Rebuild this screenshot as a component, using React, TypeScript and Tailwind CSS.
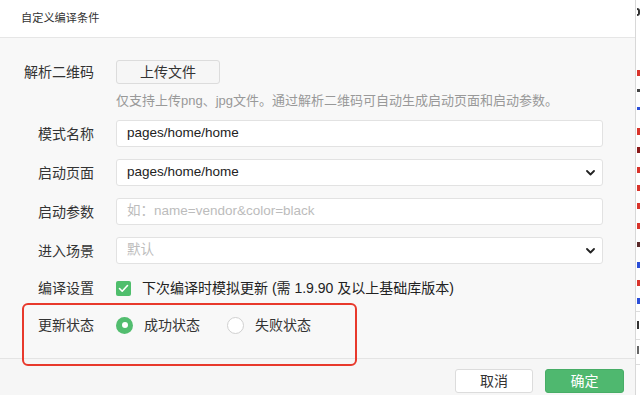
import React from "react";

const FONT = { fontFamily: '"Liberation Sans", "Noto Sans CJK SC", sans-serif' };

function Chevron() {
  return (
    <svg width="9" height="6" viewBox="0 0 9 6" className="absolute right-[7px] top-1/2 -translate-y-1/2">
      <path d="M1 1 L4.5 4.5 L8 1" fill="none" stroke="#222" strokeWidth="1.8" strokeLinecap="round" strokeLinejoin="round" />
    </svg>
  );
}

function Row({ label, children, className = "" }: { label: string; children: React.ReactNode; className?: string }) {
  return (
    <div className={`flex items-center ${className}`}>
      <div className="w-[94px] text-right text-[14px] text-[#333] leading-[20px]">{label}</div>
      <div className="ml-[22px] w-[487px]">{children}</div>
    </div>
  );
}

function Field({ text, placeholder, select }: { text?: string; placeholder?: string; select?: boolean }) {
  return (
    <div className="relative h-[27px] w-full bg-white border border-[#e2e2e2] rounded-[3px] flex items-center pl-[10px]">
      {text ? (
        <span className="text-[13.5px] text-[#222]">{text}</span>
      ) : (
        <span className="text-[13.5px] text-[#bcbcbc]">{placeholder}</span>
      )}
      {select && <Chevron />}
    </div>
  );
}

const stripMarks: [number, string, number][] = [
  [70, "#d9342b", 6],
  [89, "#444", 3],
  [107, "#2b4fd9", 3],
  [128, "#d9342b", 7],
  [147, "#8b1a1a", 6],
  [167, "#d9342b", 6],
  [185, "#d9342b", 6],
  [203, "#d9342b", 6],
  [223, "#d9342b", 6],
  [242, "#5a2a2a", 5],
  [262, "#2b4fd9", 6],
  [280, "#d9342b", 6],
  [298, "#2b4fd9", 6],
];

export default function App() {
  return (
    <div className="flex w-[640px] h-[395px] overflow-hidden bg-white" style={FONT}>
      <div className="relative flex flex-col w-[635px] h-full bg-[#f8f8f8] shrink-0">
        <div className="h-[38px] bg-white border-b border-[#e6e6e6] flex items-center pl-[21px] shrink-0">
          <span className="text-[11.2px] text-[#333]">自定义编译条件</span>
        </div>

        <div className="h-[320px] pt-[22px] shrink-0">
          <Row label="解析二维码">
            <div className="h-[24px] w-[104px] bg-[#f6f6f6] border border-[#dcdcdc] rounded-[3px] flex items-center justify-center text-[14px] text-[#333]">
              上传文件
            </div>
          </Row>
          <div className="ml-[116px] mt-[8px] text-[13px] leading-[18px] text-[#999]">
            仅支持上传png、jpg文件。通过解析二维码可自动生成启动页面和启动参数。
          </div>
          <Row label="模式名称" className="mt-[10px]">
            <Field text="pages/home/home" />
          </Row>
          <Row label="启动页面" className="mt-[12px]">
            <Field text="pages/home/home" select />
          </Row>
          <Row label="启动参数" className="mt-[12px]">
            <Field placeholder="如：name=vendor&color=black" />
          </Row>
          <Row label="进入场景" className="mt-[12px]">
            <Field placeholder="默认" select />
          </Row>
          <Row label="编译设置" className="mt-[14px]">
            <div className="flex items-center">
              <div className="w-[15px] h-[15px] rounded-[2px] bg-[#4fbe6c] flex items-center justify-center">
                <svg width="11" height="9" viewBox="0 0 11 9">
                  <path d="M1.5 4.5 L4.2 7.2 L9.5 1.5" fill="none" stroke="#fff" strokeWidth="1.6" strokeLinecap="round" strokeLinejoin="round" />
                </svg>
              </div>
              <span className="ml-[11px] text-[14px] text-[#222] leading-[20px]">
                下次编译时模拟更新 (需 1.9.90 及以上基础库版本)
              </span>
            </div>
          </Row>
          <Row label="更新状态" className="mt-[17px]">
            <div className="flex items-center">
              <div className="w-[17px] h-[17px] rounded-full bg-[#52bd6f] flex items-center justify-center">
                <div className="w-[6px] h-[6px] rounded-full bg-white" />
              </div>
              <span className="ml-[11px] text-[14px] text-[#333] leading-[20px]">成功状态</span>
              <div className="ml-[27px] w-[17px] h-[17px] rounded-full bg-white border border-[#d0d0d0]" />
              <span className="ml-[11px] text-[14px] text-[#333] leading-[20px]">失败状态</span>
            </div>
          </Row>
        </div>

        <div className="flex-1 border-t border-[#e4e4e4] bg-[#f6f6f6] flex justify-end items-start pt-[10px] pr-[11px] gap-[12px]">
          <div className="w-[78px] h-[24px] bg-white border border-[#dcdcdc] rounded-[3px] flex items-center justify-center text-[14px] text-[#333]">
            取消
          </div>
          <div className="w-[79px] h-[24px] bg-[#4fb86f] border border-[#47ad66] rounded-[3px] flex items-center justify-center text-[14px] text-white">
            确定
          </div>
        </div>

        <div className="absolute left-[22px] top-[303px] w-[335px] h-[63px] border-2 border-[#e8392c] rounded-[6px] pointer-events-none" />
      </div>

      <div className="relative w-[5px] h-full border-l border-[#d8d8d8] bg-white overflow-hidden shrink-0">
        <div className="absolute left-[1px] top-[8px] w-[3px] h-[8px] border-2 border-l-0 border-[#333] rounded-r-full" />
        {stripMarks.map(([y, c, h], i) => (
          <div key={i} className="absolute left-[1px] w-[3px]" style={{ top: y, height: h, backgroundColor: c }} />
        ))}
        <div className="absolute left-0 right-0 top-[311px] h-px bg-[#ddd]" />
        <div className="absolute left-[1px] top-[321px] w-[2px] h-[8px] bg-[#333]" />
        <div className="absolute left-0 right-0 top-[339px] h-px bg-[#ddd]" />
        <div className="absolute left-[1px] top-[346px] w-[2px] h-[8px] bg-[#666]" />
        <div className="absolute left-0 right-0 top-[364px] h-px bg-[#ddd]" />
      </div>
    </div>
  );
}
